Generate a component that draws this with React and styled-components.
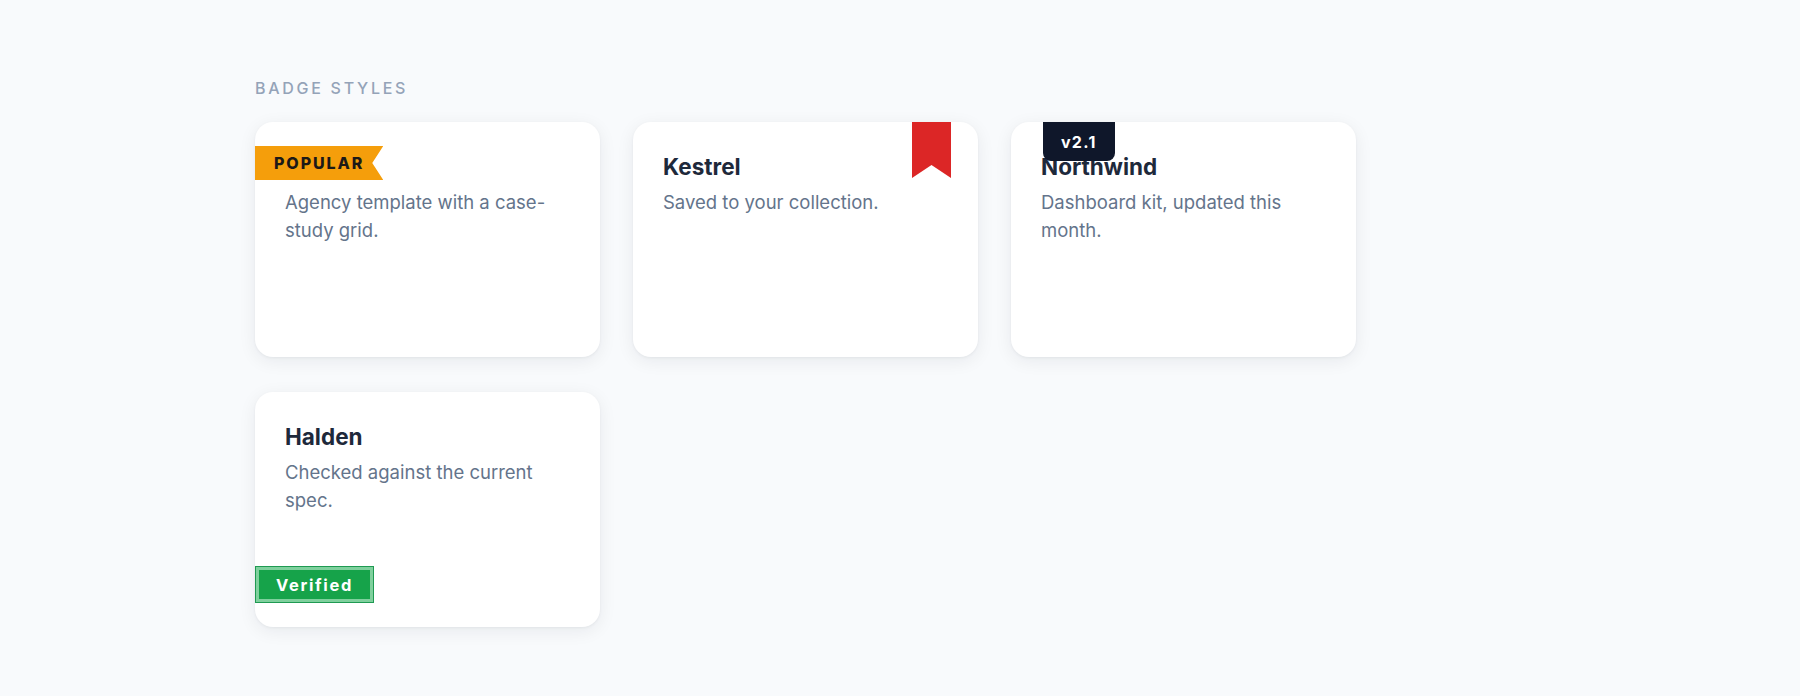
import React from 'react';
import styled, { createGlobalStyle } from 'styled-components';

const GlobalStyle = createGlobalStyle`
    body{
        margin: 0;
        background: #f8fafc;
        font-family: Inter, "Noto Sans", "Liberation Sans", sans-serif;
        -webkit-font-smoothing: antialiased;
    }
`;

// the popular card keeps an empty title row: the flag sits over it
const cards = [
    { title: '\u00a0', text: 'Agency template with a case-study grid.', badge: 'popular' },
    { title: 'Kestrel', text: 'Saved to your collection.', badge: 'bookmark' },
    { title: 'Northwind', text: 'Dashboard kit, updated this month.', badge: 'version' },
    { title: 'Halden', text: 'Checked against the current spec.', badge: 'verified' },
];

const Badge = ({type}) => {
    if (type === 'popular') return <Flag>Popular</Flag>;
    if (type === 'bookmark') return <Bookmark aria-label="Saved" />;
    if (type === 'version') return <Tab>v2.1</Tab>;
    if (type === 'verified') return <Stamp>Verified</Stamp>;
    return null;
};

const App = () => {
    return (
        <Page>
            <GlobalStyle />
            <Label>Badge styles</Label>
            <Grid>
                {cards.map((c) => (
                    <Card key={c.badge}>
                        <Title>{c.title}</Title>
                        <Text>{c.text}</Text>
                        <Badge type={c.badge} />
                    </Card>
                ))}
            </Grid>
        </Page>
    );
};

const Page = styled.main`
    display: flex;
    flex-direction: column;
    gap: 24px;
    padding: 78px 0 60px 255px;
`;

const Label = styled.div`
    font-size: 16px;
    line-height: 20px;
    font-weight: 500;
    letter-spacing: 0.17em;
    text-transform: uppercase;
    color: #94a3b8;
`;

const Grid = styled.div`
    display: grid;
    grid-template-columns: repeat(3, 345px);
    column-gap: 33px;
    row-gap: 35px;
`;

const Card = styled.div`
    position: relative;
    display: flex;
    flex-direction: column;
    gap: 7px;
    box-sizing: border-box;
    min-height: 235px;
    padding: 30px;
    background: #fff;
    border-radius: 18px;
    box-shadow: 0 4px 18px rgba(15, 23, 42, 0.07), 0 1px 3px rgba(15, 23, 42, 0.05);
`;

const Title = styled.h3`
    margin: 0;
    font-size: 22.5px;
    line-height: 29px;
    font-weight: 700;
    color: #1e293b;
`;

const Text = styled.p`
    margin: 0;
    font-size: 18.5px;
    line-height: 28px;
    color: #64748b;
`;

const Flag = styled.span`
    position: absolute;
    left: 0;
    top: 24px;
    height: 34px;
    display: flex;
    align-items: center;
    padding: 0 19px 0 19px;
    background: #f59e0b;
    color: #1c1917;
    font-size: 16px;
    font-weight: 800;
    letter-spacing: 0.12em;
    text-transform: uppercase;
    clip-path: polygon(0 0, 100% 0, calc(100% - 11px) 50%, 100% 100%, 0 100%);
`;

const Bookmark = styled.span`
    position: absolute;
    top: 0;
    right: 27px;
    width: 39px;
    height: 56px;
    background: #dc2626;
    clip-path: polygon(0 0, 100% 0, 100% 100%, 50% calc(100% - 13px), 0 100%);
`;

const Tab = styled.span`
    position: absolute;
    top: 0;
    left: 32px;
    height: 39px;
    display: flex;
    align-items: center;
    padding: 0 18px;
    background: #0f172a;
    color: #fff;
    font-size: 16px;
    font-weight: 700;
    letter-spacing: 0.08em;
    border-radius: 0 0 8px 8px;
`;

const Stamp = styled.span`
    position: absolute;
    left: 0;
    bottom: 24px;
    box-sizing: border-box;
    width: 119px;
    height: 37px;
    display: flex;
    align-items: center;
    justify-content: center;
    background: #16a34a;
    border: 1px solid #1f9a52;
    box-shadow: inset 0 0 0 3px #7fd09d;
    color: #fff;
    font-size: 16.5px;
    font-weight: 700;
    letter-spacing: 0.1em;
`;

export default App;
